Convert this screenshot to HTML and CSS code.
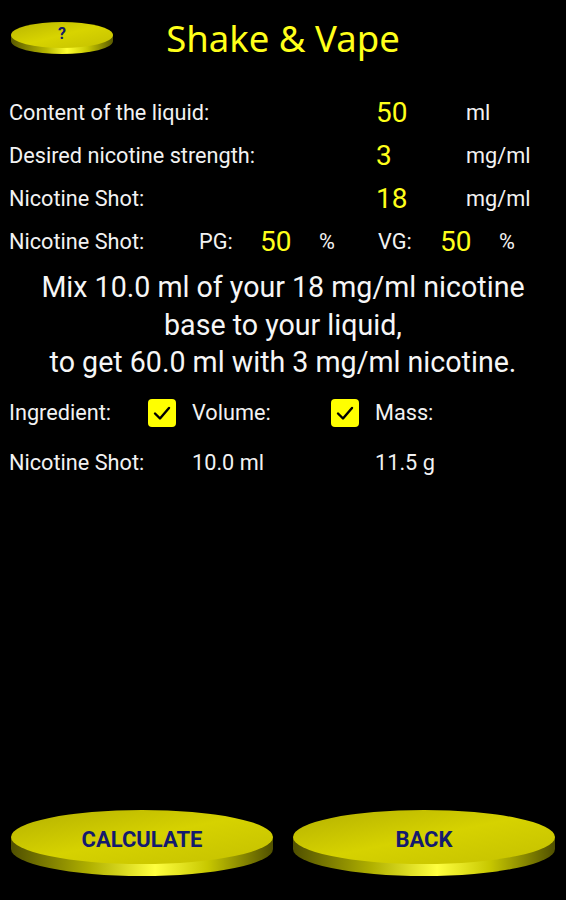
FILE: index.html
```html
<!DOCTYPE html>
<html>
<head>
<meta charset="utf-8">
<link rel="stylesheet" href="styles.css">
</head>
<body>
<div class="app">
  <header class="header">
    <div class="help-cell">
      <button class="disc disc-small">
        <svg viewBox="0 0 104 34" width="104" height="34" aria-hidden="true">
          <defs>
            <linearGradient id="sideS" x1="0" y1="0" x2="1" y2="0">
              <stop offset="0" stop-color="#5a5a00"/>
              <stop offset="0.35" stop-color="#b8b800"/>
              <stop offset="0.55" stop-color="#ffff30"/>
              <stop offset="0.75" stop-color="#c8c800"/>
              <stop offset="1" stop-color="#5a5a00"/>
            </linearGradient>
            <linearGradient id="topS" x1="0" y1="0" x2="1" y2="1">
              <stop offset="0" stop-color="#b8b400"/>
              <stop offset="0.5" stop-color="#d8d400"/>
              <stop offset="1" stop-color="#c4c000"/>
            </linearGradient>
          </defs>
          <path d="M1,14 L1,20 A51,13 0 0 0 103,20 L103,14 Z" fill="url(#sideS)"/>
          <ellipse cx="52" cy="14" rx="51" ry="13" fill="url(#topS)"/>
        </svg>
        <span class="disc-label small">?</span>
      </button>
    </div>
    <h1 class="title">Shake &amp; Vape</h1>
    <div></div>
  </header>

  <section class="inputs">
    <div class="row">
      <span class="label w-main">Content of the liquid:</span>
      <span class="value w-val">50</span>
      <span class="label">ml</span>
    </div>
    <div class="row">
      <span class="label w-main">Desired nicotine strength:</span>
      <span class="value w-val">3</span>
      <span class="label">mg/ml</span>
    </div>
    <div class="row">
      <span class="label w-main">Nicotine Shot:</span>
      <span class="value w-val">18</span>
      <span class="label">mg/ml</span>
    </div>
    <div class="row">
      <span class="label w-a">Nicotine Shot:</span>
      <span class="label w-b">PG:</span>
      <span class="value w-c">50</span>
      <span class="label w-d">%</span>
      <span class="label w-e">VG:</span>
      <span class="value w-c">50</span>
      <span class="label">%</span>
    </div>
  </section>

  <p class="message">Mix 10.0 ml of your 18 mg/ml nicotine<br>base to your liquid,<br>to get 60.0 ml with 3 mg/ml nicotine.</p>

  <section class="table">
    <div class="trow head">
      <span class="label c1">Ingredient:</span>
      <span class="check"><svg viewBox="0 0 28 28" width="28" height="28"><path d="M7 14.5 L12 19.5 L21 9" fill="none" stroke="#000" stroke-width="2.4" stroke-linecap="round" stroke-linejoin="round"/></svg></span>
      <span class="label c2">Volume:</span>
      <span class="check"><svg viewBox="0 0 28 28" width="28" height="28"><path d="M7 14.5 L12 19.5 L21 9" fill="none" stroke="#000" stroke-width="2.4" stroke-linecap="round" stroke-linejoin="round"/></svg></span>
      <span class="label c3">Mass:</span>
    </div>
    <div class="trow">
      <span class="label c1b">Nicotine Shot:</span>
      <span class="label c2b">10.0 ml</span>
      <span class="label">11.5 g</span>
    </div>
  </section>

  <div class="spacer"></div>

  <footer class="buttons">
    <button class="disc disc-big">
      <svg viewBox="0 0 264 70" width="264" height="70" aria-hidden="true">
        <defs>
          <linearGradient id="sideB" x1="0" y1="0" x2="1" y2="0">
            <stop offset="0" stop-color="#505000"/>
            <stop offset="0.3" stop-color="#b0b000"/>
            <stop offset="0.55" stop-color="#ffff40"/>
            <stop offset="0.75" stop-color="#c8c800"/>
            <stop offset="1" stop-color="#505000"/>
          </linearGradient>
          <linearGradient id="topB" x1="0" y1="0" x2="1" y2="1">
            <stop offset="0" stop-color="#b4b000"/>
            <stop offset="0.5" stop-color="#d6d200"/>
            <stop offset="1" stop-color="#c4c000"/>
          </linearGradient>
        </defs>
        <path d="M1,29 L1,41 A131,27 0 0 0 263,41 L263,29 Z" fill="url(#sideB)"/>
        <ellipse cx="132" cy="29" rx="131" ry="27" fill="url(#topB)"/>
      </svg>
      <span class="disc-label">CALCULATE</span>
    </button>
    <button class="disc disc-big">
      <svg viewBox="0 0 264 70" width="264" height="70" aria-hidden="true">
        <path d="M1,29 L1,41 A131,27 0 0 0 263,41 L263,29 Z" fill="url(#sideB)"/>
        <ellipse cx="132" cy="29" rx="131" ry="27" fill="url(#topB)"/>
      </svg>
      <span class="disc-label">BACK</span>
    </button>
  </footer>
</div>
</body>
</html>
```
FILE: styles.css
```css
* { box-sizing: border-box; }
html, body {
  margin: 0;
  padding: 0;
  background: #000;
}
body {
  font-family: Roboto, "Liberation Sans", sans-serif;
  color: #f2f2f2;
}
.app {
  width: 566px;
  height: 900px;
  display: flex;
  flex-direction: column;
}
.header {
  display: grid;
  grid-template-columns: 1fr auto 1fr;
  align-items: center;
  padding-top: 18px;
  height: 58px;
}
.help-cell {
  padding-left: 10px;
  padding-top: 0;
}
.title {
  margin: 0;
  font-family: "Noto Sans", "Open Sans", sans-serif;
  font-weight: 400;
  font-size: 36.5px;
  line-height: 40px;
  color: #ffff1a;
}
.disc {
  position: relative;
  padding: 0;
  border: 0;
  background: none;
  display: block;
  cursor: pointer;
}
.disc svg { display: block; }
.disc-label {
  position: absolute;
  left: 0;
  right: 0;
  text-align: center;
  font-family: Roboto, "Liberation Sans", sans-serif;
  font-weight: 700;
  color: #141a6e;
  font-size: 22px;
  top: 20px;
  line-height: 24px;
}
.disc-label.small {
  font-size: 16px;
  top: 3px;
  line-height: 20px;
}
.inputs {
  padding-left: 9px;
  padding-top: 33px;
}
.row {
  display: flex;
  align-items: center;
  height: 43px;
}
.label {
  font-size: 21.7px;
  color: #f2f2f2;
  white-space: nowrap;
}
.value {
  font-size: 28px;
  color: #ffff1a;
}
.w-main { width: 367px; }
.w-val { width: 90px; }
.w-a { width: 190px; }
.w-b { width: 61px; }
.w-c { width: 59px; }
.w-d { width: 59px; }
.w-e { width: 62px; }
.message {
  margin: 6px 0 0;
  text-align: center;
  font-size: 28.6px;
  line-height: 37.5px;
  color: #f6f6f6;
}
.table {
  padding-left: 9px;
  padding-top: 17px;
}
.trow {
  display: flex;
  align-items: center;
  height: 28px;
}
.trow + .trow { margin-top: 22px; }
.c1 { width: 139px; }
.c2 { width: 155px; padding-left: 16px; }
.c3 { padding-left: 16px; }
.c1b { width: 183px; }
.c2b { width: 183px; }
.check {
  width: 28px;
  height: 28px;
  border-radius: 4px;
  background: #ffff00;
  display: block;
}
.check svg { display: block; }
.spacer { flex: 1; }
.buttons {
  display: flex;
  justify-content: space-between;
  padding: 0 10px 22px 10px;
}
```
